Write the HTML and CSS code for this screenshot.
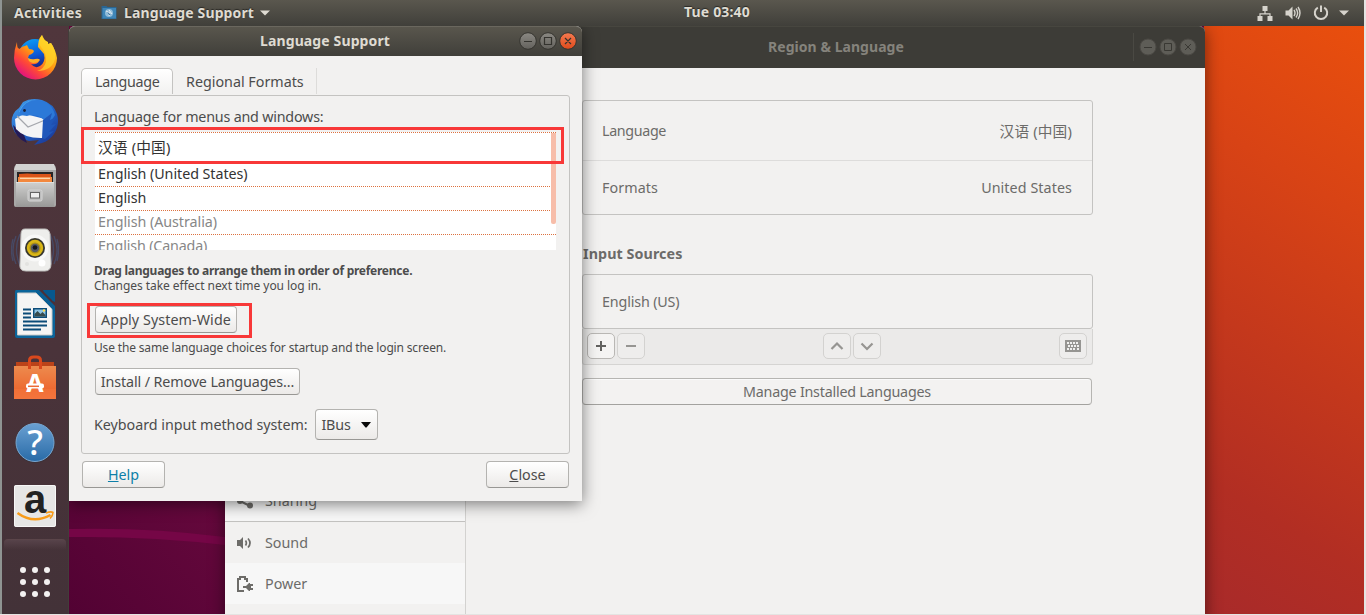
FILE: index.html
```html
<!DOCTYPE html>
<html lang="en">
<head>
<meta charset="utf-8">
<title>Language Support</title>
<link rel="stylesheet" href="styles.css">
</head>
<body>
<div class="screen">
  <header class="topbar">
    <div class="topbar-left">
      <span class="activities">Activities</span>
      <svg class="app-icon" width="16" height="14" viewBox="0 0 16 14"><path d="M0.5 0h5l1 1h9v12h-15z" fill="#2a6591"/><path d="M1.500 2h13.500v10.500h-13.500z" fill="#3f86b8"/><circle cx="8" cy="7" r="4" fill="#8fbbd9"/><path d="M5 5l4 2-1 3M8 4l3 4" stroke="#e6eef4" stroke-width="1" fill="none"/><path d="M7 6.500l2 2.500" stroke="#2a6591"/></svg>
      <span class="app-name">Language Support</span>
      <svg width="10" height="6" viewBox="0 0 10 6"><path d="M0 0.500h10l-5 5z" fill="#dfdbd2"/></svg>
    </div>
    <span class="clock">Tue 03:40</span>
    <div class="topbar-right">
      <svg width="16" height="16" viewBox="0 0 16 16"><path d="M5.500 1h5v5h-5zM0.500 11h5v5h-5zM10.500 11h5v5h-5z" fill="#d6d3cc"/><path d="M8 6v3M3 11V8.800h10V11" fill="none" stroke="#d6d3cc" stroke-width="1.200"/></svg>
      <svg width="16" height="16" viewBox="0 0 16 16"><path d="M0.500 5.500h3l4-4v13l-4-4h-3z" fill="#d6d3cc"/><path d="M9 5q2 3 0 6M11 3.500q3.300 4.500 0 9M13 2q4 6 0 12" fill="none" stroke="#d6d3cc" stroke-width="1.400"/></svg>
      <svg width="16" height="16" viewBox="0 0 16 16"><path d="M4.800 2.600a6.200 6.200 0 1 0 6.400 0" fill="none" stroke="#d6d3cc" stroke-width="2"/><path d="M8 0.500v6.500" stroke="#d6d3cc" stroke-width="2"/></svg>
      <svg class="menu-arrow" width="10" height="6" viewBox="0 0 10 6"><path d="M0 0.500h10l-5 5z" fill="#d6d3cc"/></svg>
    </div>
  </header>

  <div class="desktop">
    <nav class="dock">
      <div class="dock-item">
        <svg width="48" height="48" viewBox="0 0 48 48">
          <defs>
            <linearGradient id="fox" x1="0.800" y1="0.100" x2="0.200" y2="0.900"><stop offset="0" stop-color="#ffe226"/><stop offset="0.450" stop-color="#ff9a12"/><stop offset="0.720" stop-color="#ff4a35"/><stop offset="1" stop-color="#e3157b"/></linearGradient>
            <linearGradient id="globe" x1="0.300" y1="0" x2="0.600" y2="1"><stop offset="0" stop-color="#0a9cf5"/><stop offset="0.500" stop-color="#0c5bd8"/><stop offset="1" stop-color="#23146c"/></linearGradient>
          </defs>
          <circle cx="24" cy="21" r="16" fill="url(#globe)"/>
          <path d="M6 8q0 5 1 6l1.500 1Q11 12 14 12l2-1 2 4q4 0 5 2-1 3-5 4l-1 3q1 4 6 4l5-1q-2 4-8 3 4 5 9 2 6-4 4-12l-6-7Q27 6 31 1q1 5 6 7v2l3-1q5 8 6 15a21.500 21.500 0 0 1-43 0Q3 16 6 8z" fill="url(#fox)"/>
          <path d="M31 1Q25 7 30 13q6 7 5 15-2 7-9 9 15 0 18-12 1-10-4-16l-3 1Q33 6 31 1z" fill="#ffd22a" opacity="0.750"/>
          <path d="M17 24q4 2 7 1 4-1 5 1-2 3-7 3-5-1-5-5z" fill="#ffae27"/>
        </svg>
      </div>
      <div class="dock-item">
        <svg width="48" height="48" viewBox="0 0 48 48">
          <defs><linearGradient id="bird" x1="0" y1="0" x2="0.800" y2="1"><stop offset="0" stop-color="#4aa4ed"/><stop offset="0.500" stop-color="#236bd0"/><stop offset="1" stop-color="#1b3795"/></linearGradient></defs>
          <path d="M12 4Q20-1 31 2q12 4 15 14 3 11-3 20-5 7-12 9l-8 2 5-5-10 1Q5 41 1 28-1 16 8 10z" fill="url(#bird)"/>
          <path d="M2 27q2 13 14 18l-3-8z" fill="#241a56"/>
          <path d="M4 21q4-3 10-5l20 5-1 19q-19 1-28-9z" fill="#f4f4f5"/>
          <path d="M6 18l11 11 17-7" fill="none" stroke="#a5a7ad" stroke-width="1.300"/>
          <path d="M22 1Q14 5 13 13l-5 1Q10 6 22 1z" fill="#48a8ef"/>
          <path d="M9 13q5-11 18-11 14 2 17 15l-5 8-6-3q-8-7-17-4l-7-1z" fill="#2c79d8"/>
          <path d="M32 22l9-7-2 7 6-3-5 8 5-1-7 8 5-1-9 8-3-1z" fill="#2057ba"/>
          <circle cx="13.500" cy="12.500" r="1.400" fill="#18213c"/>
        </svg>
      </div>
      <div class="dock-item">
        <svg width="48" height="48" viewBox="0 0 48 48">
          <defs><linearGradient id="drawer" x1="0" y1="0" x2="0" y2="1"><stop offset="0" stop-color="#d0d0cf"/><stop offset="1" stop-color="#989897"/></linearGradient></defs>
          <path d="M5 3Q3 4 3 7v36q0 2 2 2h38q2 0 2-2V7q0-3-2-4z" fill="#a8a8a7"/>
          <path d="M5 2h38l2 6H3z" fill="#d2d2d1"/>
          <path d="M6 10h36v10H6z" fill="#282626"/>
          <path d="M8 12q9-1 15 0h17v8H8z" fill="#db5519"/>
          <path d="M7 15h34v6H7z" fill="#f3883e"/><path d="M9 16.300h30" stroke="#ffe9ca"/>
          <path d="M5 20h38v25H5z" fill="url(#drawer)"/><path d="M5 20.500h38" stroke="#e1e1e0"/>
          <rect x="17" y="28" width="14" height="11" rx="1.500" fill="#bdbdbd" stroke="#d5d5d5"/>
          <rect x="19.500" y="30.500" width="9" height="5.500" fill="#eee" stroke="#646464"/>
        </svg>
      </div>
      <div class="dock-item">
        <svg width="48" height="48" viewBox="0 0 48 48">
          <g fill="none" stroke="#415e8d" stroke-width="1.300" opacity="0.500"><path d="M9 8q-7 15 0 32M5 10q-6 14 0 28M2 13q-3 11 0 22M39 8q7 15 0 32M43 10q6 14 0 28M46 13q3 11 0 22"/></g>
          <path d="M14 3h20q4 0 5 5l1 30q0 7-6 7H15q-7 0-6-7L10 8q0-5 4-5z" fill="#eeeeec" stroke="#bebebc"/>
          <circle cx="24" cy="22" r="13.500" fill="#fff" opacity="0.600"/>
          <circle cx="24" cy="22" r="10" fill="#39382e"/><circle cx="24" cy="22" r="8.200" fill="#d9b616"/><circle cx="24" cy="22" r="5.500" fill="#a88e18"/><circle cx="24" cy="22" r="4.200" fill="#555964"/><circle cx="24" cy="21.500" r="2.300" fill="#15171c"/>
          <circle cx="31" cy="37" r="3.500" fill="#fff"/><circle cx="16" cy="38" r="2" fill="#e2e2e0"/>
        </svg>
      </div>
      <div class="dock-item">
        <svg width="48" height="48" viewBox="0 0 48 48">
          <path d="M5 0h23l16 15v31q0 2-2 2H6q-2 0-2-2V2q0-2 1-2z" fill="#0b659a"/>
          <path d="M6.500 3h18.500l16 16v26H6.500z" fill="#f5f5f4" stroke="#cacac9"/>
          <path d="M26 0h6l12 12v6l-4-1z" fill="#4a3139"/><path d="M24 0h4l16 16v6z" fill="#0b5f94"/>
          <path d="M32 0h12v12q-2 0-4-3l-5-5q-3-3-3-4z" fill="#07588d"/>
          <path d="M12 19.500h8M12 23.500h8M12 27.500h8M12 31.500h24M12 35.500h24M12 39.500h18" stroke="#0c4c78" stroke-width="2"/>
          <path d="M22 18h14v10H22z" fill="#0c4c78"/><path d="M23.500 19.500h11v7h-11z" fill="#8dc4e4"/><path d="M23.500 26.500V24l3-3 3 3 2-2 3 3v1.500z" fill="#374b4c"/><circle cx="33" cy="20.500" r="1.200" fill="#ffdc51"/>
        </svg>
      </div>
      <div class="dock-item">
        <svg width="48" height="48" viewBox="0 0 48 48">
          <defs><linearGradient id="bag" x1="0" y1="0" x2="0" y2="1"><stop offset="0" stop-color="#ed8b4e"/><stop offset="0.700" stop-color="#ed6a32"/><stop offset="1" stop-color="#f1733e"/></linearGradient></defs>
          <path d="M5 8h38v5H5z" fill="#bb4319"/><path d="M3 12h42v33H3z" fill="url(#bag)"/><path d="M3 35h42v10H3z" fill="#f6763c" opacity="0.500"/>
          <path d="M18.500 15V6.500q0-3.500 4-3.500h3q4 0 4 3.500v8.500" fill="none" stroke="#d9481d" stroke-width="3"/>
          <text class="store-letter" x="24" y="38" text-anchor="middle">A</text>
          <rect x="15" y="29.500" width="18" height="5" rx="2" fill="#fff"/><path d="M17 32.300h11" stroke="#ec6a35" stroke-width="1.500"/>
        </svg>
      </div>
      <div class="dock-item">
        <svg width="48" height="48" viewBox="0 0 48 48">
          <defs><linearGradient id="help" x1="0" y1="0" x2="0" y2="1"><stop offset="0" stop-color="#6aa0d2"/><stop offset="1" stop-color="#296ba7"/></linearGradient></defs>
          <circle cx="24" cy="25" r="20" fill="#353238" opacity="0.500"/><circle cx="24" cy="24.500" r="19" fill="url(#help)" stroke="#78a6d0"/>
          <text class="help-mark" x="24" y="37" text-anchor="middle">?</text>
        </svg>
      </div>
      <div class="dock-item">
        <svg width="48" height="48" viewBox="0 0 48 48">
          <rect x="3" y="3" width="42" height="42" rx="2" fill="#e6e6e5"/><rect x="3.500" y="3.500" width="41" height="41" rx="2" fill="none" stroke="#f7f7f7"/>
          <text class="amazon-letter" x="24" y="31" text-anchor="middle">a</text>
          <path d="M6.500 31q16 11.500 33 2" fill="none" stroke="#f89b18" stroke-width="2.400"/><path d="M35 31q5-2 7-.5 0 3-3 6" fill="none" stroke="#f89b18" stroke-width="1.600"/>
        </svg>
      </div>
      <div class="dock-apps">
        <svg width="32" height="32" viewBox="0 0 32 32" fill="#f3f1f1"><circle cx="4" cy="4" r="3"/><circle cx="16" cy="4" r="3"/><circle cx="28" cy="4" r="3"/><circle cx="4" cy="16" r="3"/><circle cx="16" cy="16" r="3"/><circle cx="28" cy="16" r="3"/><circle cx="4" cy="28" r="3"/><circle cx="16" cy="28" r="3"/><circle cx="28" cy="28" r="3"/></svg>
      </div>
    </nav>

    <main class="workspace">
      <svg class="swoosh" width="156" height="113" viewBox="0 0 156 113"><path d="M0 28Q80 26 156 36v8Q80 35 0 36z" fill="#750646"/></svg>

      <section class="window settings">
        <div class="settings-title">
          <span class="settings-name">Region &amp; Language</span>
          <div class="controls controls-dim">
            <svg width="60" height="20" viewBox="0 0 60 20"><g fill="#5e5d57" stroke="#4b4944"><circle cx="10" cy="10" r="8"/><circle cx="30" cy="10" r="8"/><circle cx="50" cy="10" r="8"/></g><path d="M6 10.500h8M26.500 6.500h7v7h-7zM47 7l6 6m0-6l-6 6" fill="none" stroke="#393833"/></svg>
          </div>
        </div>
        <div class="settings-body">
          <aside class="sidebar">
            <div class="side-row side-sharing"><svg width="16" height="16" viewBox="0 0 16 16"><path d="M3 8l9-5M3 8l10 5" stroke="#6d6c69" stroke-width="2"/><circle cx="3" cy="8" r="3" fill="#6d6c69"/><circle cx="13" cy="3" r="3" fill="#6d6c69"/><circle cx="13" cy="12.500" r="3" fill="#6d6c69"/></svg><span>Sharing</span></div>
            <div class="side-row"><svg width="16" height="16" viewBox="0 0 16 16"><path d="M0 5h3l3-3v12l-3-3H0z" fill="#6d6c69"/><path d="M8.500 5.500q1.700 2.500 0 5M11 3.500q4 4.500 0 9" fill="none" stroke="#6d6c69" stroke-width="1.700"/></svg><span>Sound</span></div>
            <div class="side-row side-power"><svg width="16" height="16" viewBox="0 0 16 16"><path d="M7 15H1V3h2V1h5v2h2v3" fill="none" stroke="#6d6c69" stroke-width="2"/><path d="M6 10h3l3-3h1v1h3v2h-2v2h2v2h-3v1h-1l-3-3H6z" fill="#6d6c69"/></svg><span>Power</span></div>
          </aside>
          <div class="panel">
            <div class="card locale">
              <div class="card-row locale-language"><span class="locale-name">Language</span><span class="han">汉语 (中国)</span></div>
              <div class="card-row locale-formats"><span>Formats</span><span>United States</span></div>
            </div>
            <h2 class="sources-heading">Input Sources</h2>
            <div class="card sources"><div class="card-row"><span class="source-name">English (US)</span></div></div>
            <div class="source-tools">
              <button class="tool tool-on"><svg width="12" height="12" viewBox="0 0 12 12"><path d="M1 6h10M6 1v10" stroke="#636260" stroke-width="2"/></svg></button>
              <button class="tool"><svg width="12" height="12" viewBox="0 0 12 12"><path d="M1 6h10" stroke="#969592" stroke-width="2"/></svg></button>
              <button class="tool tool-up"><svg width="14" height="12" viewBox="0 0 14 12"><path d="M1.500 9L7 3.500 12.500 9" fill="none" stroke="#969592" stroke-width="2.200"/></svg></button>
              <button class="tool"><svg width="14" height="12" viewBox="0 0 14 12"><path d="M1.500 3.500L7 9l5.500-5.500" fill="none" stroke="#969592" stroke-width="2.200"/></svg></button>
              <button class="tool tool-kbd"><svg width="16" height="12" viewBox="0 0 16 12"><path d="M0 0h16v12H0z" fill="#969592"/><path d="M2 3h12M3 6h12M2 9h2M5 9h6M12 9h2" stroke="#f0f0ef" stroke-width="1.800" stroke-dasharray="2 1"/></svg></button>
            </div>
            <button class="manage">Manage Installed Languages</button>
          </div>
        </div>
      </section>

      <section class="window dialog">
        <div class="dialog-title">
          <span class="dialog-name">Language Support</span>
          <div class="controls">
            <svg width="60" height="20" viewBox="0 0 60 20"><defs><linearGradient id="gray" x1="0" y1="0" x2="0" y2="1"><stop offset="0" stop-color="#8b8983"/><stop offset="1" stop-color="#63615c"/></linearGradient><linearGradient id="close" x1="0" y1="0" x2="0" y2="1"><stop offset="0" stop-color="#f57a50"/><stop offset="1" stop-color="#df4a1b"/></linearGradient></defs><g fill="url(#gray)" stroke="#35342f"><circle cx="10" cy="10" r="8.300"/><circle cx="30" cy="10" r="8.300"/><circle cx="50" cy="10" r="8.300" fill="url(#close)"/></g><path d="M6 10.500h8M26.500 6.500h7v7h-7zM47 7l6 6m0-6l-6 6" fill="none" stroke="#34332e" stroke-width="1.200"/></svg>
          </div>
        </div>
        <div class="dialog-body">
          <div class="tabs"><div class="tab tab-active">Language</div><div class="tab tab-regional">Regional Formats</div></div>
          <div class="frame">
            <div class="menus-label">Language for menus and windows:</div>
            <div class="lang-list">
              <div class="lang lang-first han">汉语 (中国)</div>
              <div class="lang">English (United States)</div>
              <div class="lang">English</div>
              <div class="lang lang-off">English (Australia)</div>
              <div class="lang lang-off lang-last">English (Canada)</div>
              <div class="scrollbar"></div>
            </div>
            <div class="hint hint-bold">Drag languages to arrange them in order of preference.</div>
            <div class="hint hint-changes">Changes take effect next time you log in.</div>
            <button class="btn apply">Apply System-Wide</button>
            <div class="hint hint-same">Use the same language choices for startup and the login screen.</div>
            <button class="btn install">Install / Remove Languages...</button>
            <div class="method"><span class="method-label">Keyboard input method system:</span><button class="btn combo"><span>IBus</span><svg width="10" height="6" viewBox="0 0 10 6"><path d="M0 0h10L5.500 5.500h-1z" fill="#0a0a0a"/></svg></button></div>
          </div>
          <div class="actions"><button class="btn action help"><span><u>H</u>elp</span></button><button class="btn action"><span><u>C</u>lose</span></button></div>
        </div>
        <div class="mark mark-language"></div>
        <div class="mark mark-apply"></div>
      </section>
    </main>
  </div>
</div>
</body>
</html>
```
FILE: styles.css
```css
* { box-sizing: border-box; }
body { margin: 0; overflow: hidden; }
button { font: inherit; letter-spacing: inherit; color: inherit; padding: 0; margin: 0; white-space: nowrap; }
svg { display: block; flex: none; }

.screen {
  width: 1366px; height: 615px;
  border: solid #e4e4e2; border-width: 0 2px 1px 0;
  display: flex; flex-direction: column;
  overflow: hidden;
  font: 14.3px/20px "Noto Sans", "Noto Sans CJK SC", sans-serif;
  color: #4c4c4c; white-space: nowrap;
}

/* top panel */
.topbar {
  height: 26px; flex: none;
  display: grid; grid-template-columns: 1fr auto 1fr; align-items: center;
  border-left: 2px solid #8f9492;
  background: linear-gradient(#5a574e, #403f3a);
  color: #dfdbd2; font-weight: 700; font-size: 14px;
  text-shadow: 0 -1px 1px rgba(0, 0, 0, .5);
}
.topbar-left { display: flex; align-items: center; padding-left: 12px; }
.activities { width: 87px; letter-spacing: .3px; }
.app-icon { margin-right: 7px; }
.app-name { margin-right: 6px; letter-spacing: .12px; }
.clock { position: relative; left: 34px; top: -1px; letter-spacing: .15px; }
.topbar-right { display: flex; align-items: center; justify-content: flex-end; gap: 12px; padding-right: 15px; }
.menu-arrow { margin-left: -2px; }

/* desktop */
.desktop { flex: 1; display: flex; min-height: 0; }
.dock {
  width: 69px; flex: none;
  display: flex; flex-direction: column; align-items: center;
  border-left: 2px solid #8f9492; border-right: 1px solid #423d3a;
  background: linear-gradient(#50363c, #4a333a 55%, #433238);
}
.dock-item { height: 64px; flex: none; display: flex; align-items: center; }
.dock-apps {
  width: 62px; height: 75px; margin-top: 1px;
  display: flex; justify-content: center; padding-top: 26px;
  border-top: 1px solid #5b454a; border-radius: 4px 4px 0 0;
  background: linear-gradient(#57434a, rgba(68, 50, 56, 0) 10px);
}
.store-letter { font: 700 25px "Noto Sans", sans-serif; fill: #fff; }
.help-mark { font: 500 35px "Noto Sans", sans-serif; fill: #fff; }
.amazon-letter { font: 700 40px "Liberation Sans", sans-serif; fill: #222; }

.workspace {
  position: relative; flex: 1; overflow: hidden;
  background:
    linear-gradient(211deg, #e94f0d, #d84315 28%, #c4381c 55%, #b22e23 80%, #a82a2a) right / 160px 100% no-repeat,
    linear-gradient(50deg, #520233, #6b0a3f 240px);
}
.swoosh { position: absolute; left: 0; bottom: 0; }
.window { position: absolute; top: 0; box-shadow: 0 3px 16px rgba(0, 0, 0, .5); }

/* settings window */
.settings {
  left: 156px; width: 980px; height: 600px;
  display: flex; flex-direction: column;
  border-radius: 6px 6px 0 0; background: #f2f1f0; color: #6c6b69;
}
.settings-title {
  height: 42px; flex: none;
  display: flex; align-items: center; justify-content: flex-end;
  padding-bottom: 1px;
  background: #3d3c37; border-top: 1px solid #47463f;
  border-radius: 6px 6px 0 0;
}
.settings-name { width: 365px; color: #85837c; font-weight: 700; font-size: 14px; letter-spacing: .05px; }
.controls { display: flex; align-items: center; }
.controls-dim { height: 28px; padding: 0 7px 0 4px; border-left: 1px solid #4a4943; }
.settings-body { flex: 1; display: flex; min-height: 0; }
.sidebar { width: 241px; border-right: 1px solid #d3d2d0; padding-top: 412px; }
.side-row { height: 41px; display: flex; align-items: center; gap: 12px; padding-left: 12px; }
.side-sharing { height: 42px; border-bottom: 1px solid #c3c2c0; background: #f7f7f7; }
.side-power { background: #f7f7f7; }
.panel { padding: 32px 0 0 116px; width: 627px; }
.card { border: 1px solid #c4c3c1; border-radius: 3px; }
.card-row { display: flex; align-items: center; justify-content: space-between; padding: 0 20px 0 19px; }
.locale { height: 115px; }
.locale-language { height: 60px; border-bottom: 1px solid #dddcdb; }
.locale-formats { height: 54px; letter-spacing: .08px; }
.locale-name { letter-spacing: -.35px; }
.source-name { letter-spacing: -.15px; }
.han { font-size: 14.700px; letter-spacing: .15px; }
.sources-heading { margin: 29px 0 10px 1px; font: inherit; font-weight: 700; letter-spacing: .08px; }
.sources { height: 55px; }
.sources .card-row { height: 53px; }
.source-tools {
  height: 36px; display: flex; align-items: center; gap: 2px;
  padding: 0 5px 1px 4px; border: 1px solid #d5d4d2; border-top: 0; border-radius: 0 0 3px 3px;
  background: #ebeae9;
}
.tool {
  width: 28px; height: 26px; display: flex; align-items: center; justify-content: center;
  border: 1px solid #d3d2d0; border-radius: 5px; background: #eeedec;
}
.tool-on { border-color: #b9b7b4; background: #f5f4f3; }
.tool-up { margin-left: 176px; }
.tool-kbd { margin-left: auto; }
.manage {
  width: 510px; height: 27px; margin-top: 13px;
  border: 1px solid #b6b5b2; border-bottom-color: #a3a29f; border-radius: 4px;
  background: #f3f2f1; box-shadow: inset 0 1px #fafafa; letter-spacing: -.23px;
}

/* language dialog */
.dialog { left: 0; width: 513px; height: 475px; background: #f2f1f0; border-radius: 6px 6px 0 0; }
.dialog-title {
  height: 30px; display: flex; align-items: center; justify-content: flex-end;
  padding: 0 4px 1px 0;
  border-top: 1px solid #6a675e; border-radius: 6px 6px 0 0;
  background: linear-gradient(#59564d, #403f3a);
}
.dialog-name { width: 258px; color: #dfdbd2; font-weight: 700; font-size: 14px; letter-spacing: .12px; }
.dialog-body { padding: 12px 12px 0; }
.tabs { display: flex; height: 27px; }
.tab { height: 26px; line-height: 27px; }
.tab-active {
  width: 92px; padding-left: 13px; letter-spacing: -.3px; line-height: 25px;
  border: 1px solid #c4c3c1; border-bottom: 0; border-radius: 5px 5px 0 0;
  background: linear-gradient(#fff, #f2f1f0);
}
.tab-regional { width: 144px; padding-left: 13px; border-right: 1px solid #dddcda; }
.frame {
  width: 489px; height: 359px; padding: 11px 13px 0 12px;
  border: 1px solid #c4c3c1; border-radius: 3px;
}
.menus-label { height: 20px; letter-spacing: -.2px; }
.lang-list {
  position: relative; height: 118px; margin: 5px 0 0 1px; overflow: hidden;
  border-top: 1px dotted #dc7240; background: #fff; color: #333;
}
.lang { height: 24px; line-height: 21px; padding-left: 3px; border-bottom: 1px dotted #dc7240; letter-spacing: -.05px; }
.lang-first { height: 30px; line-height: 28px; letter-spacing: .15px; }
.lang-off { color: #878787; }
.lang-last { height: 15px; border-bottom: 0; letter-spacing: -.15px; }
.scrollbar { position: absolute; right: 0; top: 0; width: 5px; height: 91px; background: #f7bda9; border-radius: 0 0 2px 2px; }
.hint { font-size: 12px; line-height: 15px; }
.hint-bold { margin-top: 13px; font-weight: 700; letter-spacing: -.26px; }
.hint-changes { letter-spacing: -.05px; }
.hint-same { letter-spacing: -.16px; }
.btn {
  display: flex; align-items: center; justify-content: center;
  height: 27px; border: 1px solid #b4b3b0; border-bottom-color: #989794; border-radius: 4px;
  background: linear-gradient(#fff, #eceae8);
}
.apply { width: 142px; margin: 13px 0 7px 1px; letter-spacing: .08px; }
.install { width: 205px; margin: 13px 0 14px 1px; letter-spacing: -.12px; }
.method { display: flex; align-items: center; height: 31px; }
.method-label { width: 221px; letter-spacing: -.03px; }
.combo { width: 63px; height: 31px; gap: 10px; padding-right: 1px; letter-spacing: -.15px; }
.actions { display: flex; justify-content: space-between; padding: 7px 1px 0; }
.action { width: 83px; }
.help { color: #0d7fa8; }
.mark { position: absolute; border: 3px solid #f83838; }
.mark-language { left: 12px; top: 101px; width: 483px; height: 37px; }
.mark-apply { left: 18px; top: 277px; width: 165px; height: 35px; }
```
